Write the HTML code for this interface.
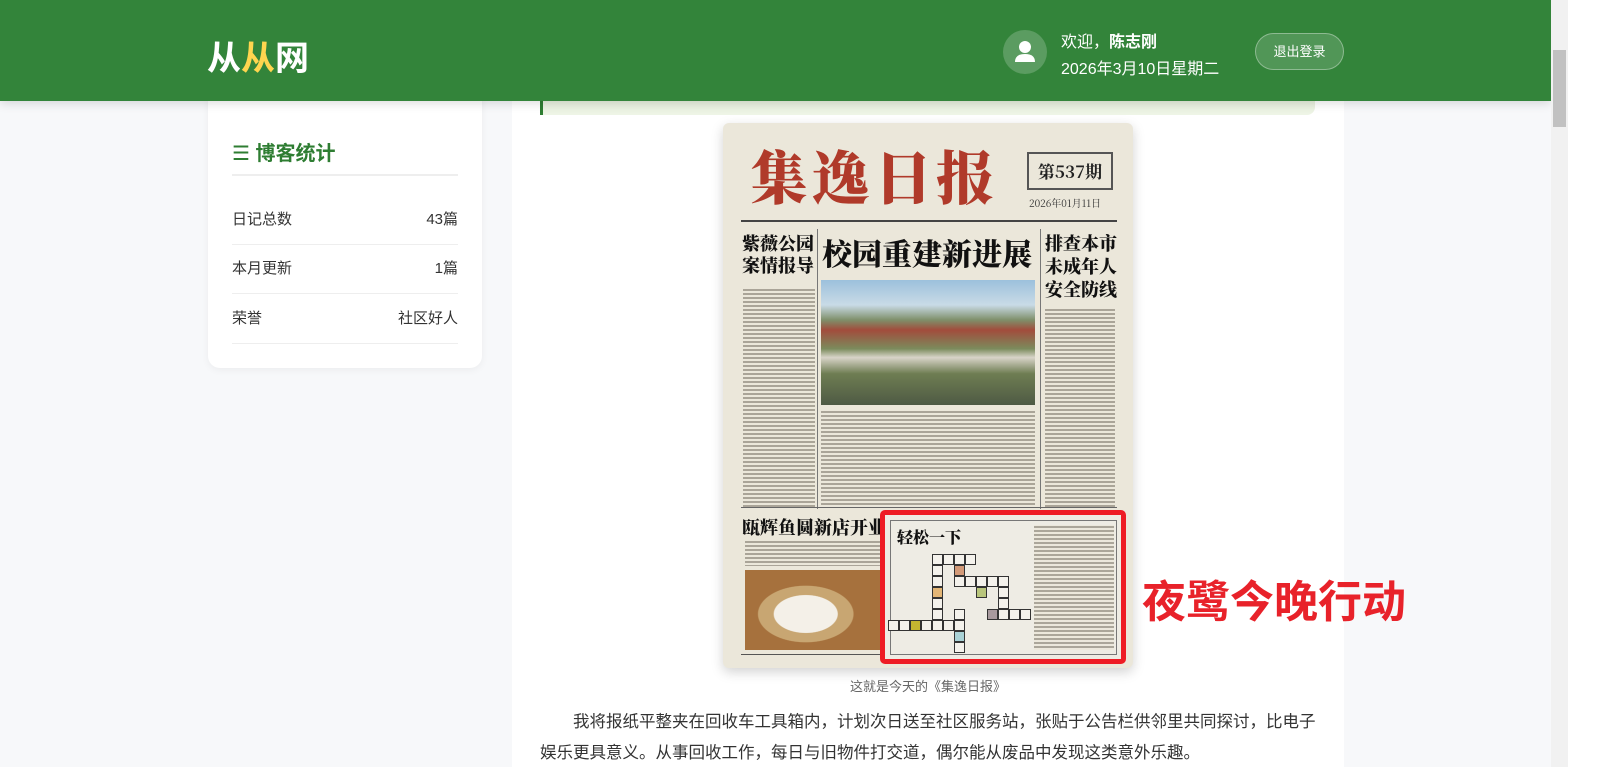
<!DOCTYPE html>
<html><head><meta charset="utf-8">
<style>
*{margin:0;padding:0;box-sizing:border-box}
html,body{width:1600px;height:767px;overflow:hidden;background:#fff;font-family:"Liberation Sans","Noto Sans CJK SC",sans-serif}
#vp{position:absolute;left:0;top:0;width:1551px;height:767px;background:#f7f8fa;overflow:hidden}
.hdr{position:absolute;left:0;top:0;width:1551px;height:101px;background:#33843a;box-shadow:0 2px 10px rgba(0,0,0,.15);z-index:5}
.logo{position:absolute;left:207px;top:31px;font-size:34px;font-weight:bold;color:#fff}
.logo span{color:#ffd54f}
.av{position:absolute;left:1003px;top:30px;width:44px;height:44px;border-radius:50%;background:rgba(255,255,255,.2)}
.w1{position:absolute;left:1061px;top:28px;color:#fff;font-size:16px}
.w2{position:absolute;left:1061px;top:55px;color:#fff;font-size:16px}
.btn{position:absolute;left:1255px;top:33px;width:89px;height:37px;border-radius:19px;border:1px solid rgba(255,255,255,.35);background:rgba(255,255,255,.15);color:#fff;font-size:13px;text-align:center;line-height:35px}
.side{position:absolute;left:208px;top:60px;width:274px;height:308px;background:#fff;border-radius:12px;box-shadow:0 2px 8px rgba(0,0,0,.05)}
.st{position:absolute;left:24px;top:77px;font-size:20px;font-weight:bold;color:#2e7d32}
.row{position:absolute;left:24px;width:226px;font-size:15px;color:#333;border-bottom:1px solid #eee;height:50px;line-height:50px}
.row b{float:right;font-weight:normal}
.main{position:absolute;left:512px;top:60px;width:832px;height:707px;background:#fff}
.quote{position:absolute;left:28px;top:30px;width:775px;height:25px;border-left:3px solid #2e7d32;background:linear-gradient(#e4ecd9,#eef5e6);border-radius:0 0 8px 0}
.np{position:absolute;left:723px;top:123px;width:410px;height:545px;background:#ebe7da;border-radius:6px;box-shadow:0 4px 12px rgba(0,0,0,.18);overflow:hidden;font-family:"Noto Serif CJK SC","Liberation Serif",serif}
.tx{position:absolute;background:repeating-linear-gradient(#ebe7da 0 1px,#9a9488 1px 3px,#ebe7da 3px 4px);opacity:.8}
.red{position:absolute;left:1142px;top:566px;font-size:44px;font-weight:bold;color:#e8222a;font-family:"Liberation Sans","Noto Sans CJK SC",sans-serif}
.cap{position:absolute;left:728px;width:400px;text-align:center;top:676px;font-size:13px;color:#666}
.p{position:absolute;left:540px;top:707px;width:780px;font-size:16.5px;color:#333;line-height:31px;text-indent:2em}
.sb{position:absolute;left:1551px;top:0;width:17px;height:767px;background:#f1f1f1}
.th{position:absolute;left:1553px;top:50px;width:13px;height:77px;background:#c1c1c1}
.cell{position:absolute;width:11px;height:11px;border:1px solid #333;background:#f4f2ec}
</style></head><body>
<div id="vp">
<div class="hdr">
<div class="logo">从<span>从</span>网</div>
<div class="av"><svg width="44" height="44" viewBox="0 0 44 44"><circle cx="22" cy="17" r="6" fill="#fff"/><path d="M12 32 Q12 24 22 24 Q32 24 32 32 Z" fill="#fff"/></svg></div>
<div class="w1">欢迎，<b>陈志刚</b></div>
<div class="w2">2026年3月10日星期二</div>
<div class="btn">退出登录</div>
</div>
<div class="side">
<div class="st"><span style="font-weight:normal">☰</span> 博客统计</div>
<div style="position:absolute;left:24px;top:114px;width:226px;height:2px;background:#eee"></div>
<div class="row" style="top:135px">日记总数<b>43篇</b></div>
<div class="row" style="top:184px">本月更新<b>1篇</b></div>
<div class="row" style="top:234px">荣誉<b>社区好人</b></div>
</div>
<div class="main"><div class="quote"></div></div>

<div class="np">
<div style="position:absolute;left:27px;top:12px;font-size:58px;font-weight:900;color:#b03a2a;letter-spacing:4px;line-height:78px;white-space:nowrap">集逸日报</div>
<div style="position:absolute;left:304px;top:29px;width:86px;height:38px;border:2px solid #555;font-size:17px;font-weight:bold;text-align:center;line-height:34px;color:#222;white-space:nowrap">第537期</div>
<div style="position:absolute;left:306px;top:72px;font-size:10px;color:#333;white-space:nowrap">2026年01月11日</div>
<div style="position:absolute;left:18px;top:97px;width:376px;height:2px;background:#444"></div>
<div style="position:absolute;left:19px;top:109px;font-size:18px;font-weight:900;line-height:22px;color:#111">紫薇公园<br>案情报导</div>
<div style="position:absolute;left:94px;top:106px;width:1px;height:280px;background:#777"></div>
<div style="position:absolute;left:317px;top:106px;width:1px;height:280px;background:#777"></div>
<div style="position:absolute;left:99px;top:108px;font-size:30px;font-weight:900;color:#111;line-height:42px;white-space:nowrap">校园重建新进展</div>
<div style="position:absolute;left:322px;top:109px;font-size:18px;font-weight:900;line-height:23px;color:#111">排查本市<br>未成年人<br>安全防线</div>
<div style="position:absolute;left:98px;top:157px;width:214px;height:125px;background:linear-gradient(#9cc0dc 0,#c9dbe6 20%,#7f8f6a 32%,#a24c3c 40%,#7b8b5c 55%,#d8d4c8 62%,#6e7d52 75%,#4e5a44 100%)"></div>
<div class="tx" style="left:20px;top:165px;width:72px;height:220px"></div>
<div class="tx" style="left:98px;top:287px;width:214px;height:98px"></div>
<div class="tx" style="left:322px;top:185px;width:70px;height:200px"></div>
<div style="position:absolute;left:18px;top:384px;width:376px;height:1px;background:#666"></div>
<div style="position:absolute;left:19px;top:391px;font-size:18px;font-weight:900;color:#111;white-space:nowrap">瓯辉鱼圆新店开业</div>
<div class="tx" style="left:22px;top:417px;width:135px;height:26px"></div>
<div style="position:absolute;left:22px;top:447px;width:135px;height:80px;background:radial-gradient(ellipse at 45% 55%,#f4f0e8 0 30%,#c8a672 31% 45%,#a6713d 46%)"></div>
<div style="position:absolute;left:18px;top:531px;width:140px;height:1px;background:#555"></div>
<div style="position:absolute;left:157px;top:387px;width:246px;height:154px;border:5px solid #ee1c25;border-radius:5px;background:#eeece4">
<div style="position:absolute;left:5px;top:5px;width:227px;height:135px;border:1px solid #777"></div>
<div style="position:absolute;left:12px;top:10px;font-size:16px;font-weight:900;color:#111">轻松一下</div>
<div class="tx" style="left:149px;top:10px;width:80px;height:125px"></div>
<div class="cell" style="left:47px;top:39px"></div><div class="cell" style="left:58px;top:39px"></div><div class="cell" style="left:69px;top:39px"></div><div class="cell" style="left:80px;top:39px"></div>
<div class="cell" style="left:47px;top:50px"></div><div class="cell" style="left:69px;top:50px;background:#d39a78"></div>
<div class="cell" style="left:47px;top:61px"></div><div class="cell" style="left:69px;top:61px"></div><div class="cell" style="left:80px;top:61px"></div><div class="cell" style="left:91px;top:61px"></div><div class="cell" style="left:102px;top:61px"></div><div class="cell" style="left:113px;top:61px"></div>
<div class="cell" style="left:47px;top:72px;background:#e3b676"></div><div class="cell" style="left:91px;top:72px;background:#b9c67c"></div><div class="cell" style="left:113px;top:72px"></div>
<div class="cell" style="left:47px;top:83px"></div><div class="cell" style="left:113px;top:83px"></div>
<div class="cell" style="left:47px;top:94px"></div><div class="cell" style="left:69px;top:94px"></div><div class="cell" style="left:102px;top:94px;background:#a89a9e"></div><div class="cell" style="left:113px;top:94px"></div><div class="cell" style="left:124px;top:94px"></div><div class="cell" style="left:135px;top:94px"></div>
<div class="cell" style="left:3px;top:105px"></div><div class="cell" style="left:14px;top:105px"></div><div class="cell" style="left:25px;top:105px;background:#c4b530"></div><div class="cell" style="left:36px;top:105px"></div><div class="cell" style="left:47px;top:105px"></div><div class="cell" style="left:58px;top:105px"></div><div class="cell" style="left:69px;top:105px"></div>
<div class="cell" style="left:69px;top:116px;background:#a9d2d6"></div><div class="cell" style="left:69px;top:127px"></div>
</div>
</div>

<div class="red">夜鹭今晚行动</div>
<div class="cap">这就是今天的《集逸日报》</div>
<div class="p">我将报纸平整夹在回收车工具箱内，计划次日送至社区服务站，张贴于公告栏供邻里共同探讨，比电子娱乐更具意义。从事回收工作，每日与旧物件打交道，偶尔能从废品中发现这类意外乐趣。</div>
</div>
<div class="sb"></div><div class="th"></div>
</body></html>
